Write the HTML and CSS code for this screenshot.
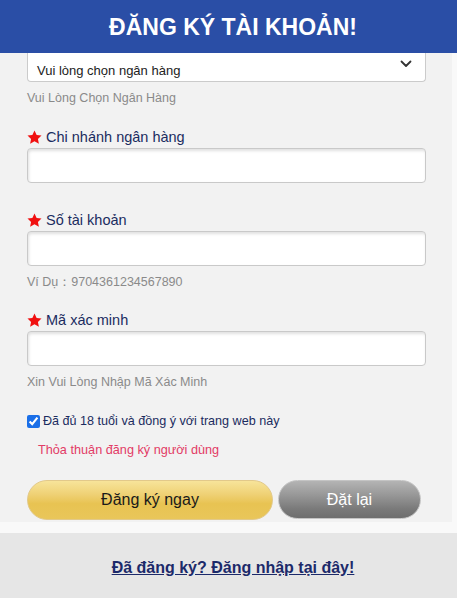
FILE: index.html
```html
<!DOCTYPE html>
<html lang="vi">
<head>
<meta charset="utf-8">
<title>Đăng ký tài khoản</title>
<link rel="stylesheet" href="styles.css">
</head>
<body>
<div class="page">
  <header class="header"><h1 class="title">ĐĂNG KÝ TÀI KHOẢN!</h1></header>
  <main class="panel">
    <div class="select-clip">
      <div class="select">
        <span class="select-text">Vui lòng chọn ngân hàng</span>
        <svg class="chevron" width="12" height="8" viewBox="0 0 12 8"><polyline points="1.5,1.5 6,6 10.5,1.5" fill="none" stroke="#333" stroke-width="1.8" stroke-linecap="round" stroke-linejoin="round"/></svg>
      </div>
    </div>
    <p class="hint hint-first">Vui Lòng Chọn Ngân Hàng</p>

    <div class="field field-a">
      <label class="label"><svg class="star" width="15" height="15" viewBox="0 0 24 24"><path d="M12 0.8l3.4 7.1 7.8 1-5.7 5.3 1.5 7.7L12 18.1 5 21.9l1.5-7.7L0.8 8.9l7.8-1z" fill="#f01010"/></svg>Chi nhánh ngân hàng</label>
      <div class="input"></div>
    </div>

    <div class="field field-b">
      <label class="label"><svg class="star" width="15" height="15" viewBox="0 0 24 24"><path d="M12 0.8l3.4 7.1 7.8 1-5.7 5.3 1.5 7.7L12 18.1 5 21.9l1.5-7.7L0.8 8.9l7.8-1z" fill="#f01010"/></svg>Số tài khoản</label>
      <div class="input"></div>
      <p class="hint">Ví Dụ：9704361234567890</p>
    </div>

    <div class="field field-c">
      <label class="label"><svg class="star" width="15" height="15" viewBox="0 0 24 24"><path d="M12 0.8l3.4 7.1 7.8 1-5.7 5.3 1.5 7.7L12 18.1 5 21.9l1.5-7.7L0.8 8.9l7.8-1z" fill="#f01010"/></svg>Mã xác minh</label>
      <div class="input"></div>
      <p class="hint">Xin Vui Lòng Nhập Mã Xác Minh</p>
    </div>

    <label class="check-row"><input type="checkbox" class="check" checked>Đã đủ 18 tuổi và đồng ý với trang web này</label>
    <p class="agreement">Thỏa thuận đăng ký người dùng</p>

    <div class="buttons">
      <button class="btn btn-primary">Đăng ký ngay</button>
      <button class="btn btn-reset">Đặt lại</button>
    </div>
  </main>
  <footer class="footer"><a class="login-link" href="#">Đã đăng ký? Đăng nhập tại đây!</a></footer>
</div>
</body>
</html>
```

FILE: styles.css
```css
* { box-sizing: border-box; }
html, body { margin: 0; padding: 0; }
body {
  font-family: "Liberation Sans", Arial, sans-serif;
  background: #f9f9f9;
  width: 457px;
  height: 598px;
  overflow: hidden;
}
.page { display: flex; flex-direction: column; height: 598px; }
.header {
  height: 53px;
  background: #2a4ea6;
  display: flex;
  align-items: center;
  justify-content: center;
  padding-left: 9px;
  flex-shrink: 0;
}
.title {
  margin: 0;
  color: #fff;
  font-size: 23px;
  font-weight: bold;
  line-height: 1;
  padding-top: 2px;
}
.panel {
  width: 452px;
  background: #f2f2f2;
  padding: 0 26px 2px 27px;
  display: flex;
  flex-direction: column;
}
.select-clip {
  height: 29px;
  background: #fff;
  border: 1px solid #cbcbcb;
  border-top: none;
  border-radius: 0 0 4px 4px;
  overflow: hidden;
}
.select {
  position: relative;
  height: 29px;
  padding: 10px 0 0 9px;
}
.select-text { font-size: 13px; color: #222; line-height: 15px; display: block; }
.chevron { position: absolute; right: 13px; top: 7px; }
.hint {
  margin: 9px 0 0;
  font-size: 12.5px;
  line-height: 15px;
  color: #8a8a8a;
}
.field { display: flex; flex-direction: column; }
.field-a { margin-top: 21px; }
.field-b { margin-top: 27px; }
.field-c { margin-top: 20px; }
.label {
  display: flex;
  align-items: center;
  height: 20px;
  margin-bottom: 1px;
  font-size: 14.5px;
  color: #1b2c60;
}
.star { margin-right: 4px; flex-shrink: 0; }
.input {
  height: 35px;
  background: #fff;
  border: 1px solid #c9c9c9;
  border-radius: 4px;
  box-shadow: inset 1px 2px 3px rgba(0,0,0,0.12);
}
.check-row {
  margin-top: 21px;
  height: 20px;
  display: flex;
  align-items: center;
  font-size: 12.6px;
  color: #1b2c60;
}
.check {
  margin: 0 3px 0 0;
  width: 13px;
  height: 13px;
  accent-color: #1a6fe8;
}
.agreement {
  margin: 9px 0 0 11px;
  line-height: 20px;
  font-size: 12.7px;
  color: #e23c66;
}
.buttons {
  margin-top: 20px;
  display: flex;
  gap: 5px;
}
.btn {
  height: 40px;
  border-radius: 20px;
  font-family: "Liberation Sans", Arial, sans-serif;
  font-size: 16px;
  cursor: pointer;
}
.btn-primary {
  width: 246px;
  border: 1px solid #e2c98a;
  color: #1a1a1a;
  background: linear-gradient(to bottom, #f7e49a 0%, #efd175 35%, #e8c352 60%, #e9c65a 100%);
}
.btn-reset {
  width: 143px;
  height: 39px;
  border: 1px solid #c4c4c4;
  color: #fff;
  background: linear-gradient(to bottom, #b4b4b4 0%, #969696 40%, #7a7a7a 75%, #6e6e6e 100%);
}
.footer {
  margin-top: 11px;
  flex: 1;
  background: #e6e6e6;
  display: flex;
  justify-content: center;
  padding: 26px 0 0 9px;
}
.login-link {
  font-size: 16px;
  font-weight: bold;
  color: #1c2a6a;
  text-decoration: underline;
  line-height: 18px;
}
```
